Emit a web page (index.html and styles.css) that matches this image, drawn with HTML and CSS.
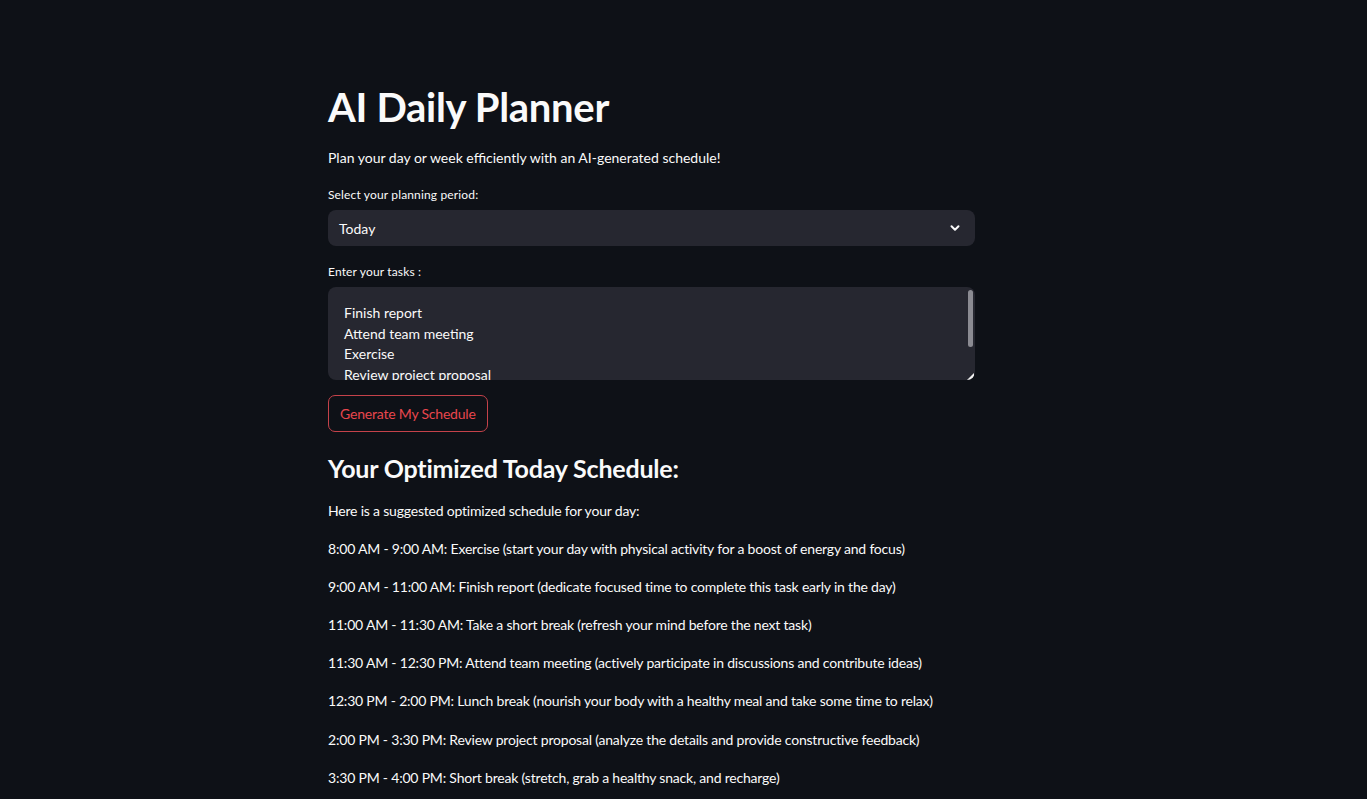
FILE: index.html
```html
<!DOCTYPE html>
<html lang="en">
<head>
<meta charset="utf-8">
<title>AI Daily Planner</title>
<link rel="stylesheet" href="styles.css">
</head>
<body>
<main class="main">
  <h1 class="title">AI Daily Planner</h1>
  <p class="intro">Plan your day or week efficiently with an AI-generated schedule!</p>

  <div class="field">
    <div class="label">Select your planning period:</div>
    <div class="select">
      <span class="select-value">Today</span>
      <svg class="chevron" width="12" height="12" viewBox="0 0 12 12" aria-hidden="true">
        <path d="M2.5 4.2 L6 7.7 L9.5 4.2" fill="none" stroke="#fafafa" stroke-width="2" stroke-linecap="round" stroke-linejoin="round"/>
      </svg>
    </div>
  </div>

  <div class="field field-tasks">
    <div class="label">Enter your tasks :</div>
    <div class="textarea">
      <div class="textarea-lines">
        <div>Finish report</div>
        <div>Attend team meeting</div>
        <div>Exercise</div>
        <div>Review project proposal</div>
      </div>
      <div class="scroll-thumb"></div>
      <svg class="grip" width="7" height="7" viewBox="0 0 7 7" aria-hidden="true"><path d="M7 0 L7 7 L0 7 Z" fill="#f2f2f2"/></svg>
    </div>
  </div>

  <button class="btn" type="button">Generate My Schedule</button>

  <h2 class="subhead">Your Optimized Today Schedule:</h2>
  <div class="schedule">
    <p>Here is a suggested optimized schedule for your day:</p>
    <p>8:00 AM - 9:00 AM: Exercise (start your day with physical activity for a boost of energy and focus)</p>
    <p>9:00 AM - 11:00 AM: Finish report (dedicate focused time to complete this task early in the day)</p>
    <p>11:00 AM - 11:30 AM: Take a short break (refresh your mind before the next task)</p>
    <p>11:30 AM - 12:30 PM: Attend team meeting (actively participate in discussions and contribute ideas)</p>
    <p>12:30 PM - 2:00 PM: Lunch break (nourish your body with a healthy meal and take some time to relax)</p>
    <p>2:00 PM - 3:30 PM: Review project proposal (analyze the details and provide constructive feedback)</p>
    <p>3:30 PM - 4:00 PM: Short break (stretch, grab a healthy snack, and recharge)</p>
  </div>
</main>
</body>
</html>
```

FILE: styles.css
```css
html, body {
  margin: 0;
  padding: 0;
  background: #0e1117;
  height: 100%;
  overflow: hidden;
}

body {
  font-family: "Lato", "Open Sans", sans-serif;
  color: #fafafa;
  font-size: 14px;
}

.main {
  width: 647px;
  margin-left: 328px;
  padding-top: 82px;
}

.title {
  margin: 0;
  font-size: 40px;
  font-weight: 700;
  line-height: 50px;
  letter-spacing: -0.3px;
}

.intro {
  margin: 15px 0 0;
  line-height: 22px;
  letter-spacing: 0;
}

.field {
  margin-top: 18px;
}

.field-tasks {
  margin-top: 18px;
}

.label {
  font-size: 12px;
  line-height: 16px;
  margin-bottom: 7px;
  letter-spacing: 0.15px;
}

.select {
  height: 36px;
  background: #262730;
  border-radius: 8px;
  display: flex;
  align-items: center;
  justify-content: space-between;
  padding: 0 14px 0 11px;
  box-sizing: border-box;
}

.select-value {
  font-size: 14px;
  letter-spacing: 0;
}

.chevron {
  display: block;
}

.textarea {
  position: relative;
  height: 93px;
  background: #262730;
  border-radius: 8px;
  overflow: hidden;
  box-sizing: border-box;
  padding: 16px 16px 0;
}

.textarea-lines {
  line-height: 20.5px;
  font-size: 14px;
  letter-spacing: 0;
}

.scroll-thumb {
  position: absolute;
  right: 2px;
  top: 3px;
  width: 5px;
  height: 57px;
  border-radius: 3px;
  background: #8b8b92;
}

.grip {
  position: absolute;
  right: 1px;
  bottom: 0;
  display: block;
}

.btn {
  display: block;
  margin-top: 15px;
  height: 37px;
  padding: 0 11px;
  background: #0e1117;
  border: 1px solid #c4424a;
  border-radius: 7px;
  color: #e8464d;
  font-family: inherit;
  font-size: 14px;
  letter-spacing: -0.2px;
}

.subhead {
  margin: 19px 0 0;
  font-size: 25px;
  font-weight: 700;
  line-height: 34px;
  letter-spacing: -0.2px;
}

.schedule p {
  margin: 0;
  line-height: 22px;
  padding-top: 16.1px;
  letter-spacing: -0.2px;
}

.schedule p:first-child {
  padding-top: 15px;
}
```
